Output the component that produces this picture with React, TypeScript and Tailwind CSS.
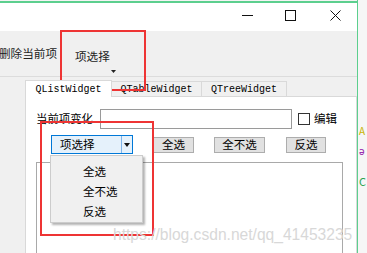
import React from "react";

const cjk = { fontFamily: '"Noto Sans CJK SC", "Noto Sans", sans-serif' };
const mono = { fontFamily: '"Liberation Mono", "DejaVu Sans Mono", monospace' };

function Btn({ w, label }: { w: string; label: string }) {
  return (
    <div
      className={`${w} h-[16px] shrink-0 bg-[#e1e1e1] border border-[#adadad] flex items-center justify-center text-[11.5px] leading-none text-black whitespace-nowrap`}
      style={cjk}
    >
      {label}
    </div>
  );
}

export default function App() {
  return (
    <div className="relative w-[367px] h-[253px] overflow-hidden bg-[#f6f6f6] flex">
      {/* window */}
      <div className="w-[358px] h-full shrink-0 flex flex-col bg-white border-r border-[#5ccf8e]">
        <div className="h-[1px] bg-[#f4f4f4] shrink-0" />
        <div className="h-[2px] bg-[#5ccf8e] shrink-0" />
        {/* title bar */}
        <div className="h-[28px] shrink-0 bg-white flex items-start justify-end pr-[16px] pt-[7px]">
          <svg width="11" height="11" viewBox="0 0 11 11" className="mr-[32px]">
            <line x1="0" y1="5.5" x2="11" y2="5.5" stroke="#111" strokeWidth="1" />
          </svg>
          <svg width="11" height="11" viewBox="0 0 11 11" className="mr-[34px]">
            <rect x="0.5" y="0.5" width="10" height="10" fill="none" stroke="#111" strokeWidth="1" />
          </svg>
          <svg width="11" height="11" viewBox="0 0 11 11">
            <path d="M0.5 0.5 L10.5 10.5 M10.5 0.5 L0.5 10.5" stroke="#111" strokeWidth="1" />
          </svg>
        </div>
        {/* toolbar */}
        <div className="h-[46px] shrink-0 bg-[#f0f0f0] border-b border-[#dcdcdc] flex items-start">
          <div className="mt-[14px] ml-[-1px] text-[11.6px] leading-[16px] text-[#222] whitespace-nowrap" style={cjk}>
            删除当前项
          </div>
          <div className="ml-[18px] mt-[17px] flex flex-col">
            <div className="text-[11.6px] leading-[16px] text-[#222] whitespace-nowrap" style={cjk}>
              项选择
            </div>
            <svg width="5" height="3" viewBox="0 0 5 3" className="ml-[36px] mt-[6px]">
              <path d="M0 0 L5 0 L2.5 3 Z" fill="#222" />
            </svg>
          </div>
        </div>
        {/* body */}
        <div className="flex-1 flex bg-[#f0f0f0]">
          <div className="w-[25px] shrink-0" />
          <div className="flex-1 flex flex-col pt-[2px]">
            {/* tabs */}
            <div className="h-[17px] flex items-end shrink-0">
              <div
                className="w-[87px] h-[17px] bg-white border border-b-0 border-[#d9d9d9] flex items-center justify-center text-[10px] text-black relative z-10 mb-[-1px]"
                style={mono}
              >
                QListWidget
              </div>
              <div
                className="w-[90px] h-[15px] bg-[#f0f0f0] border border-b-0 border-l-0 border-[#d9d9d9] flex items-center justify-center text-[10px] text-black"
                style={mono}
              >
                QTableWidget
              </div>
              <div
                className="w-[85px] h-[15px] bg-[#f0f0f0] border border-b-0 border-l-0 border-[#d9d9d9] flex items-center justify-center text-[10px] text-black"
                style={mono}
              >
                QTreeWidget
              </div>
            </div>
            {/* pane */}
            <div className="flex-1 bg-white border border-[#d9d9d9] border-b-0 flex flex-col pt-[12px]">
              <div className="flex items-center h-[20px] pl-[10px]">
                <div className="text-[11.4px] leading-none text-black w-[57px] shrink-0 whitespace-nowrap" style={cjk}>
                  当前项变化
                </div>
                <div className="ml-[7px] w-[192px] h-[20px] shrink-0 border border-[#9a9a9a] bg-white" />
                <div className="ml-[6px] w-[12px] h-[12px] shrink-0 border border-[#333] bg-white" />
                <div className="ml-[4px] text-[11.5px] leading-none text-black whitespace-nowrap" style={cjk}>
                  编辑
                </div>
              </div>
              <div className="flex items-center h-[19px] mt-[6px] pl-[25px]">
                <div className="w-[82px] h-[19px] shrink-0 bg-[#e5f1fb] border border-[#0078d7] flex items-center">
                  <div className="w-[69px] pl-[8px] text-[11.5px] leading-none text-black whitespace-nowrap" style={cjk}>
                    项选择
                  </div>
                  <div className="h-full w-[1px] bg-[#7eb4ea]" />
                  <div className="flex-1 flex items-center justify-center">
                    <svg width="6" height="4" viewBox="0 0 6 4">
                      <path d="M0 0 L6 0 L3 4 Z" fill="#111" />
                    </svg>
                  </div>
                </div>
                <div className="ml-[20px]">
                  <Btn w="w-[41px]" label="全选" />
                </div>
                <div className="ml-[20px]">
                  <Btn w="w-[51px]" label="全不选" />
                </div>
                <div className="ml-[21px]">
                  <Btn w="w-[40px]" label="反选" />
                </div>
              </div>
              <div className="ml-[10px] mt-[8px] w-[307px] flex-1 border border-b-0 border-[#a9a9a9] bg-white" />
            </div>
          </div>
        </div>
      </div>

      {/* fragments of content behind the window */}
      <div className="absolute left-[359px] top-[126px] text-[10px] leading-none text-[#c8b400]" style={cjk}>
        A
      </div>
      <div className="absolute left-[359px] top-[146px] text-[10px] leading-none text-[#9b30b0]" style={cjk}>
        ə
      </div>
      <div className="absolute left-[359px] top-[176px] text-[11px] leading-none text-[#2da44e]" style={cjk}>
        C
      </div>

      {/* dropdown popup */}
      <div className="absolute left-[50px] top-[155px] w-[93px] h-[68px] bg-[#f0f0f0] border border-[#cccccc] shadow-[2px_2px_2px_rgba(0,0,0,0.3)] flex flex-col pt-[6px] pl-[32px]">
        <div className="h-[20px] flex items-center text-[11.5px] leading-none text-black" style={cjk}>
          全选
        </div>
        <div className="h-[21px] flex items-center text-[11.5px] leading-none text-black" style={cjk}>
          全不选
        </div>
        <div className="h-[20px] flex items-center text-[11.5px] leading-none text-black" style={cjk}>
          反选
        </div>
      </div>

      {/* red annotation boxes */}
      <div className="absolute left-[60px] top-[30px] w-[86px] h-[61px] border-2 border-[#ee3434]" />
      <div className="absolute left-[40px] top-[121px] w-[114px] h-[115px] border-2 border-[#ee3434]" />

      {/* watermark */}
      <div
        className="absolute left-[113px] top-[226px] text-[15.6px] leading-[18px] text-[#d8d8d8] whitespace-nowrap"
        style={{ fontFamily: '"Liberation Sans", Arial, sans-serif' }}
      >
        https://blog.csdn.net/qq_41453235
      </div>
    </div>
  );
}
